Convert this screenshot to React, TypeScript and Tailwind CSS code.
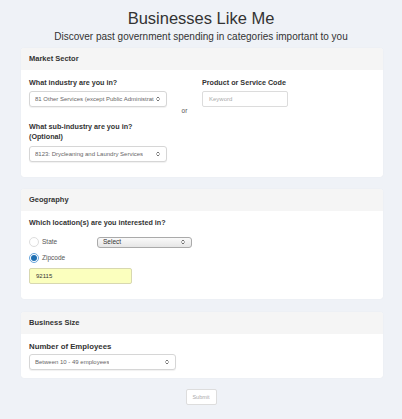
import { ChevronsUpDown } from "lucide-react";

function Select({ value, className }: { value: string; className: string }) {
  return (
    <div className={`flex items-center justify-between rounded-[3px] border border-[#d6d6d6] bg-white px-[5px] text-[6px] text-[#666] shadow-[0_1px_1px_rgba(0,0,0,0.06)] ${className}`}>
      <span className="truncate">{value}</span>
      <ChevronsUpDown size={6} strokeWidth={3} className="shrink-0 text-[#444]" />
    </div>
  );
}

function Card({ title, children, className }: { title: string; children: React.ReactNode; className?: string }) {
  return (
    <div className={`ml-[21px] w-[362px] overflow-hidden rounded-[3px] bg-white shadow-[0_0_1px_rgba(0,0,0,0.08)] ${className ?? ""}`}>
      <div className="flex h-[22px] items-center bg-[#f5f5f5] px-[8px] text-[7.5px] font-bold text-[#333]">{title}</div>
      <div className="px-[8px]">{children}</div>
    </div>
  );
}

export default function App() {
  return (
    <div className="h-[419px] bg-[#eff2f7] font-['Liberation_Sans',Arial,sans-serif] text-[#333]">
      <h1 className="pt-[8px] text-center text-[16.5px] leading-[20px] text-[#333]">Businesses Like Me</h1>
      <p className="mt-[3px] text-center text-[10px] leading-[12px] text-[#333]">Discover past government spending in categories important to you</p>

      <Card title="Market Sector" className="mt-[5px]">
        <div className="flex pt-[8px] pb-[15px]">
          <div className="w-[138px]">
            <div className="text-[7.2px] font-bold leading-[10px]">What industry are you in?</div>
            <Select value="81 Other Services (except Public Administrat" className="mt-[3px] h-[16px] w-[138px]" />
            <div className="mt-[15px] text-[7.2px] font-bold leading-[10px]">What sub-industry are you in?</div>
            <div className="text-[7.2px] font-bold leading-[10px]">(Optional)</div>
            <Select value="8123: Drycleaning and Laundry Services" className="mt-[4px] h-[16px] w-[138px]" />
          </div>
          <div className="w-[35px] pt-[28px] text-center text-[6.5px] leading-[10px] text-[#555]">or</div>
          <div>
            <div className="text-[7.2px] font-bold leading-[10px]">Product or Service Code</div>
            <div className="mt-[3px] flex h-[16px] w-[86px] items-center rounded-[2px] border border-[#dcdcdc] bg-white px-[6px] text-[6px] text-[#aaa]">Keyword</div>
          </div>
        </div>
      </Card>

      <Card title="Geography" className="mt-[12px]">
        <div className="pt-[7px] pb-[15px]">
          <div className="text-[7.2px] font-bold leading-[10px]">Which location(s) are you interested in?</div>
          <div className="mt-[8px] flex h-[12px] items-center">
            <span className="h-[10px] w-[10px] rounded-full border border-[#ddd] bg-white" />
            <span className="ml-[3px] w-[55px] text-[6.5px] text-[#555]">State</span>
            <div className="flex h-[11px] w-[95px] items-center justify-between rounded-[3px] border border-[#aaa] bg-gradient-to-b from-[#fafafa] to-[#e6e6e6] px-[5px] text-[6.5px] text-[#333]">
              <span>Select</span>
              <ChevronsUpDown size={6} strokeWidth={3} className="text-[#444]" />
            </div>
          </div>
          <div className="mt-[4px] flex h-[12px] items-center">
            <span className="flex h-[10px] w-[10px] items-center justify-center rounded-full border border-[#6aa6dc] bg-white">
              <span className="h-[6px] w-[6px] rounded-full bg-[#1f6fb2]" />
            </span>
            <span className="ml-[3px] text-[6.5px] text-[#555]">Zipcode</span>
          </div>
          <div className="mt-[4px] flex h-[16px] w-[103px] items-center rounded-[2px] border border-[#d8d8b0] bg-[#fbffbe] px-[6px] text-[6px] text-[#333]">92115</div>
        </div>
      </Card>

      <Card title="Business Size" className="mt-[13px]">
        <div className="pt-[8px] pb-[8px]">
          <div className="text-[7.8px] font-semibold leading-[10px]">Number of Employees</div>
          <Select value="Between 10 - 49 employees" className="mt-[2px] h-[16px] w-[147px]" />
        </div>
      </Card>

      <div className="mt-[11px] flex justify-center">
        <button className="h-[16px] w-[31px] rounded-[2px] border border-[#ddd] bg-white text-[5.5px] text-[#aaa]">Submit</button>
      </div>
    </div>
  );
}
